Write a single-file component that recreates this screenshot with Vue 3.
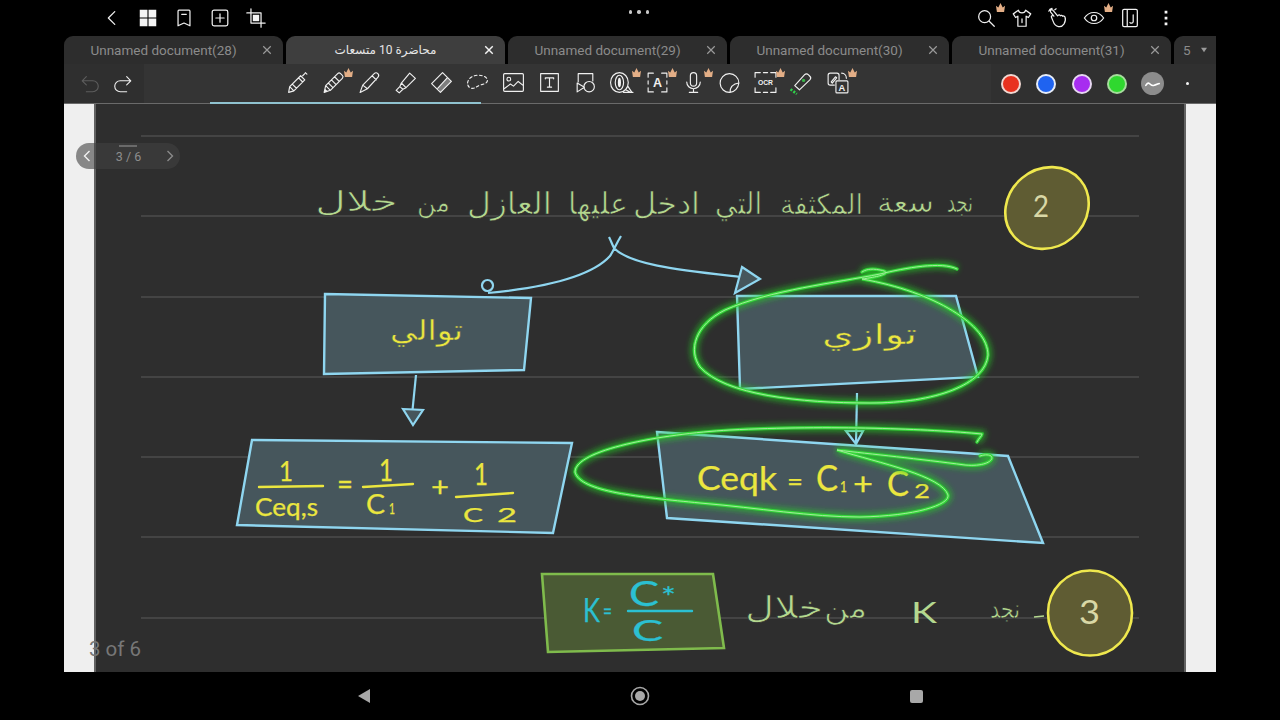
<script setup>
const leftIcons = [
  { d: 'M15 5l-7 7 7 7' },
  { f: 'M3 3h8.400v8.400H3zM12.600 3H21v8.400h-8.400zM3 12.600h8.400V21H3zM12.600 12.600H21V21h-8.400z' },
  { d: 'M6.500 3.500h11a1 1 0 0 1 1 1v16L12 17.500l-6.500 3v-16a1 1 0 0 1 1-1zM9.500 8h5' },
  { d: 'M5.500 3.500h13a2 2 0 0 1 2 2v13a2 2 0 0 1-2 2h-13a2 2 0 0 1-2-2v-13a2 2 0 0 1 2-2zM12 7.500v9M7.500 12h9' },
  { d: 'M6.500 2v15.500H22M2 6.500h15.500V22', f: 'M8.500 8.500h7v7h-7z' }
]
const rightIcons = [
  { d: 'M10.500 4a6.500 6.500 0 1 0 0 13 6.500 6.500 0 0 0 0-13zM15.500 15.500L21 21', crown: true },
  { d: 'M8 3.500L2.500 7.500 5 11.500l2.500-1.500v11h9V10l2.500 1.500 2.500-4-5.500-4c-.5 2-2 3-4 3s-3.500-1-4-3zM12 13v4' },
  { d: 'M7.500 10L4 5.500a1.600 1.600 0 0 1 2.600-1.900l5 6 .5-.5c.8-.8 2-.5 2.500.5.8-.8 2-.5 2.500.5.8-.6 2-.3 2.500.8.8 2 .5 5-1 7.500-1.500 2.300-3.500 3.500-6 3-3-.6-5-3-6-6L5 11.500c-.7-1 0-2.300 1.500-2M2 4.500C2.500 3 4 1.800 5.500 1.500M8.500 3L10 2' },
  { d: 'M1.500 12C4.500 7.500 8 6 12 6s7.500 1.500 10.500 6c-3 4.500-6.500 6-10.500 6s-7.500-1.500-10.500-6zM12 9a3 3 0 1 0 0 6 3 3 0 0 0 0-6z', crown: true },
  { d: 'M5.500 2.500h13a1.500 1.500 0 0 1 1.500 1.500v16a1.500 1.500 0 0 1-1.500 1.500h-13A1.500 1.500 0 0 1 4 20V4a1.500 1.500 0 0 1 1.500-1.500zM9 2.500v19M15.500 8.500v7.500a2 2 0 0 1-3.500 1' },
  { f: 'M10.500 4h3v3h-3zM10.500 10.500h3v3h-3zM10.500 17h3v3h-3z' }
]
const tools = [
  { d: 'M3.500 21.500l1-5.500L15 5.500l4 4L8.500 20zM4.500 16l4 4M7 13.500l4 4M13 7.500l4 4M17 5.500l2-2M19.500 2.500l1.500 1.500' },
  { d: 'M3 21.500l1.500-6.500L16 3.500a2 2 0 0 1 2.800 0l1.700 1.700a2 2 0 0 1 0 2.800L9 19.500zM4.500 15L9 19.500M7 12.500l4.500 4.500M10 9.500l4.500 4.500M13 6.500l4.500 4.500', f: 'M3 21.500l.9-3.500 2.500 2.500z', crown: true },
  { d: 'M3 21.500l2.500-7L16.500 3.500c1-1 2.500-1 3.500 0s1 2.500 0 3.500L10 18zM5.500 14.500l4.500 3.500M14.500 5.500l4 4' },
  { d: 'M8 12.500L16 3l5.500 5-9 9zM8 12.500L6.500 16l3 2.500 3-1.500M6.500 16L3 19.500l3 2.500 3.500-3.500' },
  { d: 'M2.500 13L13 2.500l8.500 8.500L11 21.500zM8.500 17.500L17.500 7.500', f: 'M11 21.500L21.500 11l-4-3.500-9 10z', shade: true },
  { d: 'M2.500 12.500c0-4 5-7.500 10-7.500s9 2 9 5-4 3.500-7 4.500-4 2.500-6.500 3-5.500-1-5.500-5z', dashed: true },
  { d: 'M3.500 3.500h17a1 1 0 0 1 1 1v15a1 1 0 0 1-1 1h-17a1 1 0 0 1-1-1v-15a1 1 0 0 1 1-1zM7.500 7a1.800 1.800 0 1 0 0 3.600 1.800 1.800 0 0 0 0-3.600zM3 18l6-4.500 3 2 4.500-4.500 5 4' },
  { d: 'M3.500 3.500h17v17h-17zM8 8.500V7.500h8v1M12 7.500v9M10 16.500h4' },
  { d: 'M5 11.500V3.500h14v7M4 12.500v8.500l7-4.500zM15.500 11a5 5 0 1 0 0 10 5 5 0 0 0 0-10z' },
  { d: 'M1.500 12a8.500 9.500 0 1 0 17 0 8.500 9.500 0 1 0-17 0M6 12a4 7 0 1 0 8 0 4 7 0 1 0-8 0M14 21.500h9M16 19l5 2.500M18 15.500l4 6', f: 'M8.500 12a1.500 4.500 0 1 0 3 0 1.500 4.500 0 1 0-3 0z', crown: true },
  { d: 'M3 7V3h5M16 3h5v4M21 17v4h-5M8 21H3v-4M3 10.500v3M21 10.500v3', label: 'A', size: 12, ly: 16.500, crown: true },
  { d: 'M9 5.500a3 3 0 0 1 6 0v7a3 3 0 0 1-6 0zM5.500 11.500a6.500 6.500 0 0 0 13 0M12 18v3.500M8 21.500h8', crown: true },
  { d: 'M21 12.500a9 9 0 1 0-8.500 9c0-2.500 1-8 8.500-9zM12.500 21.500c4.500-.5 8-4.500 8.500-9' },
  { d: 'M2 7V2.500h5M17 2.500h5V7M22 17v4.500h-5M7 21.500H2V17M10 2.500h4M10 21.500h4', label: 'OCR', size: 6.500, ly: 14.300, crown: true },
  { d: 'M5.500 15L15 4.500c1-1 2.500-1 3.500 0L20 6c1 1 1 2.500 0 3.500L10 19z', green: true },
  { d: 'M9 14.500H5a2 2 0 0 1-2-2V5a2 2 0 0 1 2-2h6.500a2 2 0 0 1 2 2v4M6 11.500l4-5 1.200 1L7 12.500zM16 3c2.500 0 4.500 2 4.500 5M11.500 10.500h9.500a1 1 0 0 1 1 1V21a1 1 0 0 1-1 1h-9.500a1 1 0 0 1-1-1v-9.500a1 1 0 0 1 1-1z', label: 'A', size: 9, lx: 16.200, ly: 19.800, crown: true }
]
const tabs = [
  { title: 'Unnamed document(28)' },
  { title: 'محاضرة 10 متسعات', active: true },
  { title: 'Unnamed document(29)' },
  { title: 'Unnamed document(30)' },
  { title: 'Unnamed document(31)' }
]
const colors = [
  { c: '#e8321f', r: '#f1d8d2' },
  { c: '#1f63f0', r: '#e6ecf7' },
  { c: '#a72cf0', r: '#e7d7f2' },
  { c: '#2fd82f', r: '#a6dd9d' }
]
const ruled = [136, 216, 297, 377, 457, 537, 618]
const boxes = [
  { p: '325,294 531,298 524,370 324,374', k: 'blue' },
  { p: '737,296 956,296 978,377 740,389', k: 'blue' },
  { p: '252,440 572,443 553,533 237,525', k: 'blue' },
  { p: '657,432 1008,456 1043,543 667,518', k: 'blue' },
  { p: '542,574 713,574 724,648 548,652', k: 'olive' }
]
const inks = [
  { t: 'نجد', x: 947, y: 212, w: 26, s: 28, k: 'sage ar' },
  { t: 'سعة', x: 877, y: 212, w: 57, s: 28, k: 'sage ar' },
  { t: 'المكثفة', x: 780, y: 214, w: 83, s: 28, k: 'sage ar' },
  { t: 'التي', x: 715, y: 214, w: 47, s: 30, k: 'sage ar' },
  { t: 'ادخل', x: 633, y: 214, w: 67, s: 30, k: 'sage ar' },
  { t: 'عليها', x: 568, y: 214, w: 60, s: 30, k: 'sage ar' },
  { t: 'العازل', x: 467, y: 214, w: 85, s: 30, k: 'sage ar' },
  { t: 'من', x: 417, y: 212, w: 33, s: 26, k: 'sage ar' },
  { t: 'خلال', x: 315, y: 211, w: 83, s: 28, k: 'sage ar' },
  { t: 'توالي', x: 390, y: 340, w: 73, s: 28, k: 'lemon ar' },
  { t: 'توازي', x: 822, y: 344, w: 95, s: 28, k: 'lemon ar' },
  { t: '1', x: 279, y: 481, w: 14, s: 26, k: 'lemon math' },
  { t: 'Ceq,s', x: 255, y: 516, w: 63, s: 25, k: 'lemon math' },
  { t: '=', x: 337, y: 495, w: 16, s: 30, k: 'lemon math' },
  { t: '1', x: 379, y: 481, w: 14, s: 30, k: 'lemon math' },
  { t: 'C', x: 366, y: 514, w: 19, s: 26, k: 'lemon math' },
  { t: '1', x: 389, y: 514, w: 6, s: 15, k: 'lemon math' },
  { t: '+', x: 431, y: 496, w: 18, s: 26, k: 'lemon math' },
  { t: '1', x: 474, y: 485, w: 14, s: 30, k: 'lemon math' },
  { t: 'C', x: 463, y: 522, w: 20, s: 20, k: 'lemon math' },
  { t: '2', x: 497, y: 522, w: 20, s: 20, k: 'lemon math' },
  { t: 'Ceqk', x: 697, y: 490, w: 80, s: 33, k: 'lemon math' },
  { t: '=', x: 787, y: 491, w: 16, s: 26, k: 'lemon math' },
  { t: 'C', x: 816, y: 491, w: 22, s: 36, k: 'lemon math' },
  { t: '1', x: 840, y: 492, w: 7, s: 16, k: 'lemon math' },
  { t: '+', x: 853, y: 495, w: 20, s: 30, k: 'lemon math' },
  { t: 'C', x: 887, y: 496, w: 22, s: 34, k: 'lemon math' },
  { t: '2', x: 914, y: 498, w: 16, s: 20, k: 'lemon math' },
  { t: 'K', x: 583, y: 622, w: 17, s: 32, k: 'teal math' },
  { t: '=', x: 603, y: 619, w: 9, s: 24, k: 'teal math' },
  { t: 'C', x: 629, y: 606, w: 30, s: 34, k: 'teal math' },
  { t: '*', x: 661, y: 607, w: 15, s: 26, k: 'teal math' },
  { t: 'C', x: 632, y: 641, w: 31, s: 28, k: 'teal math' },
  { t: 'من', x: 824, y: 618, w: 43, s: 28, k: 'sage ar' },
  { t: 'خلال', x: 745, y: 618, w: 78, s: 30, k: 'sage ar' },
  { t: 'K', x: 911, y: 623, w: 26, s: 28, k: 'sage math fine' },
  { t: 'نجد', x: 990, y: 618, w: 30, s: 26, k: 'sage ar' },
  { t: '2', x: 1033, y: 217, w: 16, s: 31, k: 'pale math fine' },
  { t: '3', x: 1079, y: 624, w: 21, s: 33, k: 'pale math fine' }
]
const neon = [
  'M957 269C942 261 905 268 880 274C835 283 770 290 725 310C695 325 688 350 700 367C725 395 800 403 870 403C935 403 985 385 988 355C988 325 935 292 862 279C885 276 892 272 880 270C870 268 865 270 862 272',
  'M977 442C979 438 982 436 982 434C930 429 830 425 730 430C660 434 575 450 575 472C580 492 640 497 700 503C760 508 810 517 860 517C915 516 950 505 948 495C942 476 880 463 837 450C870 454 920 459 965 465C985 467 995 460 991 456C988 454 983 455 980 456'
]
</script>

<template>
  <div class="stage">
    <header class="topbar">
      <div class="icon-row">
        <span v-for="(ic, i) in leftIcons" :key="i" class="top-btn">
          <svg class="ico" viewBox="0 0 24 24"><path v-if="ic.d" :d="ic.d" /><path v-if="ic.f" class="solid" :d="ic.f" /></svg>
        </span>
      </div>
      <div class="dots"><i></i><i></i><i></i></div>
      <div class="icon-row end">
        <span v-for="(ic, i) in rightIcons" :key="i" class="top-btn">
          <svg class="ico" viewBox="0 0 24 24"><path v-if="ic.d" :d="ic.d" /><path v-if="ic.f" class="solid" :d="ic.f" /></svg>
          <svg v-if="ic.crown" class="crown" viewBox="0 0 12 10"><path d="M1 3l2.500 2L6 0l2.500 5L11 3l-1 7H2z" /></svg>
        </span>
      </div>
    </header>

    <div class="tabs">
      <div v-for="tab in tabs" :key="tab.title" class="tab" :class="{ active: tab.active }">
        <span class="tab-title">{{ tab.title }}</span>
        <svg class="tab-x" viewBox="0 0 12 12"><path d="M1.500 1.500l9 9M10.500 1.500l-9 9" /></svg>
      </div>
      <div class="tab more">
        <span>5</span>
        <svg class="caret" viewBox="0 0 10 8"><path d="M1 1h8L5 7z" /></svg>
      </div>
    </div>

    <div class="toolbar">
      <div class="history">
        <svg class="ico dim" viewBox="0 0 24 24"><path d="M8 4L3.500 8.500 8 13M3.500 8.500H15a6 6 0 0 1 0 12H8" /></svg>
        <svg class="ico" viewBox="0 0 24 24"><path d="M16 4l4.500 4.500L16 13M20.500 8.500H9a6 6 0 0 0 0 12h7" /></svg>
      </div>
      <div class="tools">
        <span v-for="(tool, i) in tools" :key="i" class="tool">
          <svg class="ico thin" viewBox="0 0 24 24">
            <path v-if="tool.f" :class="tool.shade ? 'shade' : 'solid'" :d="tool.f" />
            <path :class="{ dashed: tool.dashed }" :d="tool.d" />
            <text v-if="tool.label" class="ico-label" :x="tool.lx || 12" :y="tool.ly" :font-size="tool.size">{{ tool.label }}</text>
            <g v-if="tool.green">
              <circle class="green-dot" cx="14" cy="10" r="1.600" />
              <path class="green-mark" d="M1.500 18.500l6 4.500" />
            </g>
          </svg>
          <svg v-if="tool.crown" class="crown" viewBox="0 0 12 10"><path d="M1 3l2.500 2L6 0l2.500 5L11 3l-1 7H2z" /></svg>
        </span>
      </div>
      <div class="palette">
        <span v-for="col in colors" :key="col.c" class="swatch" :style="{ background: col.c, borderColor: col.r }"></span>
        <span class="stroke-pick">
          <svg viewBox="0 0 24 24"><path d="M5 14c2-3 3-3 5-1s4 1 9-1" /></svg>
        </span>
        <span class="pin"></span>
      </div>
      <span class="peek"></span>
    </div>

    <main class="canvas">
      <section class="sheet">
        <svg class="board" viewBox="96 104 1088 568">
          <defs>
            <filter id="glow" x="-10%" y="-30%" width="120%" height="160%">
              <feGaussianBlur stdDeviation="3" />
            </filter>
          </defs>
          <line v-for="y in ruled" :key="y" class="rule" x1="141" x2="1139" :y1="y" :y2="y" />
          <polygon v-for="b in boxes" :key="b.p" class="box" :class="b.k" :points="b.p" />
          <ellipse class="disc" cx="1047" cy="208" rx="43.500" ry="39" transform="rotate(-40 1047 208)" />
          <ellipse class="disc" cx="1090" cy="613" rx="42" ry="42.500" />

          <path class="arrow" d="M609 237C611 241 612 244 614 248M621 236C616 244 614 250 610 256C590 278 540 288 488 293M614 248C630 265 680 270 740 277" />
          <circle class="arrow" cx="487.500" cy="285.500" r="5.500" />
          <polygon class="arrow head" points="742,267 760,279 735,293" />
          <path class="arrow" d="M416 375L412 415" />
          <polygon class="arrow head" points="403,409 423,410 413,425" />
          <path class="arrow" d="M857 393L856 444" />
          <polygon class="arrow" points="846,431 863,431 856,444" />

          <path class="bar" d="M259 487L323 486M363 487L413 484M456 497L513 493" />
          <path class="bar teal-bar" d="M628 611L692 611" />

          <text v-for="(ink, i) in inks" :key="i" class="ink" :class="ink.k" :x="ink.x" :y="ink.y"
            :font-size="ink.s" :textLength="ink.w" lengthAdjust="spacingAndGlyphs">{{ ink.t }}</text>
          <path class="dash-ink" d="M1034 617L1044 616" />

          <g v-for="(d, i) in neon" :key="i">
            <path class="neon-glow" :d="d" filter="url(#glow)" />
            <path class="neon" :d="d" />
            <path class="neon-core" :d="d" />
          </g>
        </svg>
      </section>
      <div class="pager">
        <span class="pager-grip"></span>
        <svg class="pager-arrow light" viewBox="0 0 10 14"><path d="M7.500 2L2.500 7l5 5" /></svg>
        <span class="pager-text">3 / 6</span>
        <svg class="pager-arrow" viewBox="0 0 10 14"><path d="M2.500 2l5 5-5 5" /></svg>
      </div>
      <span class="page-label">3 of 6</span>
    </main>

    <nav class="navbar">
      <span class="nav-cell"><svg class="nav-ico" viewBox="0 0 16 16"><path d="M14 1v14L2 8z" /></svg></span>
      <span class="nav-cell"><svg class="nav-ico" viewBox="0 0 20 20"><circle class="ring" cx="10" cy="10" r="8.500" /><circle cx="10" cy="10" r="5" /></svg></span>
      <span class="nav-cell"><span class="nav-square"></span></span>
    </nav>
  </div>
</template>

<style>
html, body { margin: 0; background: #000; }
</style>

<style scoped>
.stage {
  width: 1280px;
  height: 720px;
  background: #000;
  display: flex;
  flex-direction: column;
  overflow: hidden;
  font-family: Roboto, "DejaVu Sans", sans-serif;
}
.topbar {
  height: 36px;
  flex: none;
  padding: 0 96px 0 94px;
  display: grid;
  grid-template-columns: 1fr auto 1fr;
  align-items: center;
}
.icon-row { display: flex; align-items: center; }
.icon-row.end { justify-content: flex-end; }
.top-btn {
  position: relative;
  width: 36px;
  height: 36px;
  display: flex;
  align-items: center;
  justify-content: center;
}
.top-btn .ico { width: 22px; height: 22px; stroke-width: 1.350; }
.top-btn .crown { left: 27px; top: 3px; }
.ico {
  fill: none;
  stroke: #f0f0f0;
  stroke-width: 1.600;
  stroke-linecap: round;
  stroke-linejoin: round;
}
.solid { fill: #f4f4f4; stroke: none; }
.shade { fill: #7e7e7e; stroke: none; }
.dashed { stroke-dasharray: 2.600 2.400; }
.crown {
  position: absolute;
  width: 11px;
  height: 9px;
  fill: #e3ae86;
}
.dots { display: flex; gap: 5px; margin-bottom: 12px; }
.dots i { width: 3.500px; height: 3.500px; border-radius: 50%; background: #c8c8c8; }

.tabs {
  height: 28px;
  flex: none;
  margin: 0 64px;
  display: flex;
  gap: 3px;
  overflow: hidden;
}
.tab {
  width: 219px;
  flex: none;
  background: #2d2d2d;
  border-radius: 9px 9px 0 0;
  display: flex;
  align-items: center;
  position: relative;
  color: #8b8b8b;
  font-size: 13.500px;
}
.tab-title { width: 199px; text-align: center; }
.tab.active { background: #3e3e3e; color: #e6e6e6; font-size: 12px; }
.tab-x {
  position: absolute;
  right: 11px;
  top: 9px;
  width: 10px;
  height: 10px;
  fill: none;
  stroke: #9a9a9a;
  stroke-width: 1.400;
}
.tab.active .tab-x { stroke: #f4f4f4; stroke-width: 1.700; }
.tab.more {
  flex: 1;
  width: auto;
  padding-left: 9px;
  gap: 9px;
  border-radius: 9px 0 0 0;
}
.caret { width: 8px; height: 6px; fill: #9a9a9a; }

.toolbar {
  height: 39px;
  flex: none;
  margin: 0 64px;
  background: #343434;
  border-bottom: 1px solid #6a6a6a;
  display: flex;
  position: relative;
}
.history {
  width: 80px;
  flex: none;
  box-sizing: border-box;
  padding-left: 15px;
  display: flex;
  align-items: center;
  gap: 11px;
  background: #2f2f2f;
}
.history .ico { width: 22px; height: 22px; stroke-width: 1.200; }
.history .dim { stroke: #5e5e5e; }
.tools {
  flex: 1;
  display: flex;
  align-items: center;
  justify-content: center;
  padding-bottom: 2px;
}
.tool {
  position: relative;
  width: 36px;
  height: 36px;
  display: flex;
  align-items: center;
  justify-content: center;
}
.tool .ico { width: 25px; height: 25px; }
.tool .crown { left: 27px; top: 3px; }
.thin { stroke-width: 1.100; }
.ico-label {
  font-family: "Liberation Sans", sans-serif;
  font-weight: 700;
  fill: #f0f0f0;
  stroke: none;
  text-anchor: middle;
}
.green-dot { fill: #38b449; stroke: none; }
.green-mark { stroke: #2fd24a; stroke-width: 2.500; stroke-dasharray: 2 1.400; stroke-linecap: butt; }
.palette {
  width: 225px;
  flex: none;
  box-sizing: border-box;
  padding-left: 10px;
  display: flex;
  align-items: center;
  background: #303030;
}
.swatch {
  width: 20px;
  height: 20px;
  box-sizing: border-box;
  border: 2px solid;
  border-radius: 50%;
  margin-right: 15.400px;
  flex: none;
}
.stroke-pick {
  width: 23px;
  height: 23px;
  margin-left: -1.500px;
  border-radius: 50%;
  background: #8c8c8c;
  display: flex;
}
.stroke-pick svg { fill: none; stroke: #fff; stroke-width: 1.700; stroke-linecap: round; }
.pin {
  width: 3px;
  height: 3px;
  margin-left: 22px;
  border-radius: 50%;
  background: #f4f4f4;
}
.peek {
  position: absolute;
  left: 146px;
  bottom: -1px;
  width: 271px;
  height: 2px;
  background: #8fc2cf;
}

.canvas {
  flex: 1;
  min-height: 0;
  margin: 0 64px;
  position: relative;
  background: #efefef;
  display: flex;
  padding: 0 30px;
}
.sheet {
  flex: 1;
  background: #2e2e2e;
  border-left: 2px solid #626262;
  border-right: 2px solid #626262;
}
.board { display: block; width: 100%; height: 100%; }
.rule { stroke: #5a5a5a; stroke-width: 1; }
.box { stroke-width: 2.400; stroke-linejoin: miter; }
.box.blue { fill: #46565c; stroke: #8fd6f0; }
.box.olive { fill: #4a5a34; stroke: #7fbb4c; stroke-width: 2.600; }
.disc { fill: #5f5c33; stroke: #efe84e; stroke-width: 2.600; }
.arrow { fill: none; stroke: #8fd6f0; stroke-width: 2.200; }
.arrow.head { fill: #46565c; }
.bar { fill: none; stroke: #ebe63f; stroke-width: 2.400; stroke-linecap: round; }
.teal-bar { stroke: #2bc0d2; }
.ink { font-family: "DejaVu Sans", sans-serif; }
.ink.math { font-family: Lato, sans-serif; font-weight: 400; stroke-width: .25; }
.ink.math.fine { stroke-width: 0; }
.ink.sage.ar { stroke: #2e2e2e; stroke-width: .7; }
.ink.lemon.ar { stroke: #46565c; stroke-width: .4; }
.sage { fill: #b4d88f; }
.lemon { fill: #ebe63f; }
.lemon.math { stroke: #ebe63f; }
.teal { fill: #2bc0d2; }
.teal.math { stroke: #2bc0d2; }
.pale { fill: #d9d8a6; }
.dash-ink { stroke: #b4d88f; stroke-width: 1.500; }
.neon-glow { fill: none; stroke: #22d422; stroke-width: 7; opacity: .7; }
.neon { fill: none; stroke: #35d83a; stroke-width: 3.200; stroke-linecap: round; }
.neon-core { fill: none; stroke: #a3ec9b; stroke-width: 1; stroke-linecap: round; }

.pager {
  position: absolute;
  left: 12px;
  top: 39px;
  width: 104px;
  height: 26px;
  border-radius: 13px;
  background: rgba(65, 65, 65, .6);
  display: flex;
  align-items: center;
  justify-content: space-between;
  padding: 0 5px 0 6px;
  box-sizing: border-box;
  color: #8d8d8d;
  font-size: 12.500px;
}
.pager-grip {
  position: absolute;
  left: 43px;
  top: 2px;
  width: 18px;
  height: 2px;
  background: #6a6a6a;
}
.pager-arrow { width: 10px; height: 14px; fill: none; stroke: #8a8a8a; stroke-width: 1.400; }
.pager-arrow.light { stroke: #f2f2f2; }
.page-label {
  position: absolute;
  left: 25px;
  top: 533px;
  color: #777;
  font-size: 20.500px;
}

.navbar {
  height: 48px;
  flex: none;
  display: flex;
  justify-content: center;
  align-items: center;
}
.nav-cell { width: 276px; display: flex; justify-content: center; align-items: center; }
.nav-ico { width: 16px; height: 16px; fill: #a8a8a8; }
.nav-ico .ring { fill: none; stroke: #a8a8a8; stroke-width: 1.600; }
.nav-cell:nth-child(2) .nav-ico { width: 20px; height: 20px; }
.nav-square { width: 13px; height: 13px; border-radius: 2px; background: #a8a8a8; }
</style>
